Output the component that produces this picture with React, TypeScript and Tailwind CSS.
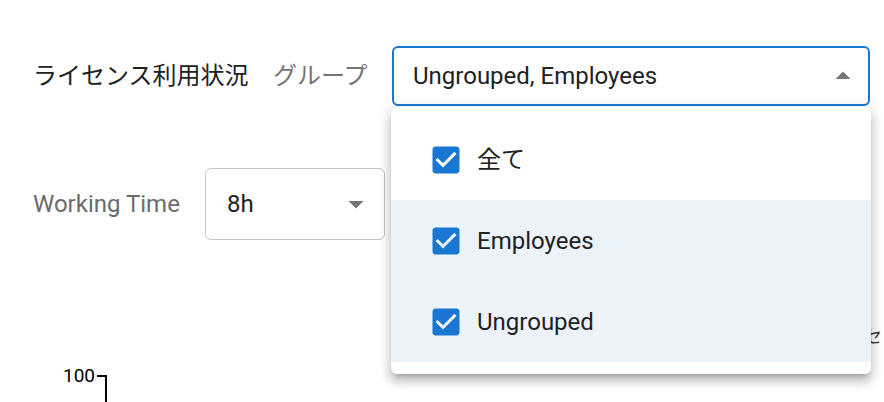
import React from 'react'

const FONT = "font-['Roboto','Noto_Sans_CJK_JP',sans-serif]"

type Option = { label: string; highlighted: boolean }

const options: Option[] = [
  { label: '全て', highlighted: false },
  { label: 'Employees', highlighted: true },
  { label: 'Ungrouped', highlighted: true },
]

// MUI 風のドロップダウン矢印
function ArrowIcon({ up }: { up?: boolean }) {
  return (
    <svg width="36" height="36" viewBox="0 0 24 24" className="shrink-0">
      <path d={up ? 'M7 14l5-5 5 5z' : 'M7 10l5 5 5-5z'} fill="#757575" />
    </svg>
  )
}

function CheckedBox() {
  return (
    <svg width="36" height="36" viewBox="0 0 24 24" className="shrink-0">
      <path
        fill="#1976d2"
        d="M19 3H5c-1.11 0-2 .9-2 2v14c0 1.1.89 2 2 2h14c1.11 0 2-.9 2-2V5c0-1.1-.89-2-2-2zm-9 14l-5-5 1.41-1.41L10 14.17l7.59-7.59L19 8l-9 9z"
      />
    </svg>
  )
}

export default function App() {
  return (
    <div className={`relative h-[402px] w-[884px] overflow-hidden bg-white ${FONT}`}>
      <div className="pl-[33px] pt-[46px]">
        {/* タイトル + グループ選択 */}
        <div className="flex items-center">
          <h2 className="text-[24px] leading-none font-normal text-[#212121] w-[216px]">ライセンス利用状況</h2>
          <span className="ml-[24px] w-[96px] text-[24px] leading-none text-[#757575]">グループ</span>
          <div className="relative ml-[23px]">
            <div className="flex h-[60px] w-[478px] items-center justify-between rounded-[6px] border-2 border-[#1976d2] pl-[19px] pr-[7px]">
              <span className="text-[24px] text-[#212121]">Ungrouped, Employees</span>
              <ArrowIcon up />
            </div>

            {/* 開いているメニュー */}
            <div className="absolute left-[-1px] top-[61px] z-20 w-[480px] rounded-[6px] bg-white py-[12px] shadow-[0px_5px_5px_-3px_rgba(0,0,0,0.2),0px_8px_10px_1px_rgba(0,0,0,0.14),0px_3px_14px_2px_rgba(0,0,0,0.12)]">
              {options.map((o) => (
                <div
                  key={o.label}
                  className={`flex h-[81px] items-center gap-[13px] pl-[37px] ${o.highlighted ? 'bg-[#ecf3fb]' : 'bg-white'}`}
                >
                  <CheckedBox />
                  <span className="text-[24px] text-[#212121]">{o.label}</span>
                </div>
              ))}
            </div>
          </div>
        </div>

        {/* Working Time */}
        <div className="mt-[62px] flex items-center">
          <span className="w-[147px] text-[24px] leading-none text-[#6b6b6b]">Working Time</span>
          <div className="ml-[25px] flex h-[72px] w-[180px] items-center justify-between rounded-[6px] border border-[#c4c4c4] pl-[21px] pr-[10px]">
            <span className="text-[24px] text-[#212121]">8h</span>
            <ArrowIcon />
          </div>
        </div>

        {/* チャート */}
        <div className="relative mt-[125px] flex items-start pl-[30px]">
          <span className="text-[19px] leading-[22px] text-black">100</span>
          <div className="ml-[2px] mt-[10px] h-[30px] w-[10px] border-t-2 border-r-2 border-black" />
        </div>
      </div>

      {/* メニューの裏に隠れた凡例 */}
      <span className="absolute left-[864px] top-[327px] z-0 text-[18px] leading-[20px] text-[#333]">セ</span>
    </div>
  )
}
